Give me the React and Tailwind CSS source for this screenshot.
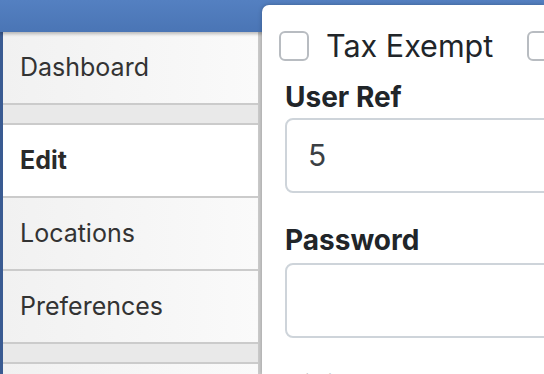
export default function App() {
  const font = { fontFamily: 'Inter, "Noto Sans", sans-serif' };
  return (
    <div className="w-[544px] h-[374px] overflow-hidden bg-[#f2f2f2] flex flex-col" style={font}>
      <div className="h-[32px] shrink-0 bg-gradient-to-b from-[#5480c1] to-[#4a75b5] shadow-[0_2px_3px_rgba(0,0,0,0.25)] relative z-10" />
      <div className="flex flex-1 min-h-0">
        <div className="w-[3px] shrink-0 bg-[#3a5b92]" />
        <div className="w-[259px] shrink-0 flex flex-col border-r-4 border-[#cbcbcb] bg-[#f4f4f4]">
          <div className="h-[71px] shrink-0 flex items-center pl-[17px] text-[25px] text-[#333] bg-gradient-to-r from-[#f1f1f1] to-[#fafafa]">Dashboard</div>
          <div className="h-[22px] shrink-0 border-y-2 border-[#cbcbcb] bg-[#e9e9e9]" />
          <div className="h-[71px] shrink-0 flex items-center pl-[17px] text-[25px] font-bold text-[#2a2a2a] bg-white">Edit</div>
          <div className="h-[73px] shrink-0 border-t-2 border-[#cbcbcb] flex items-center pl-[17px] text-[25px] text-[#333] bg-gradient-to-r from-[#f1f1f1] to-[#fafafa]">Locations</div>
          <div className="h-[73px] shrink-0 border-t-2 border-[#cbcbcb] flex items-center pl-[17px] text-[25px] text-[#333] bg-gradient-to-r from-[#f1f1f1] to-[#fafafa]">Preferences</div>
          <div className="h-[22px] shrink-0 border-y-2 border-[#cbcbcb] bg-[#e9e9e9]" />
          <div className="flex-1 bg-gradient-to-r from-[#f1f1f1] to-[#fafafa]" />
        </div>
        <div className="flex-1 min-w-0 -mt-[27px] relative z-20 bg-white rounded-tl-[7px] shadow-[0_0_4px_rgba(0,0,0,0.25)] text-[#212529]">
          <div className="flex items-center pl-[17px] pt-[26px]">
            <div className="w-[30px] h-[30px] shrink-0 rounded-[6px] border-2 border-[#b8bcc1]" />
            <span className="ml-[17px] text-[30.5px] leading-[30px] whitespace-nowrap">Tax Exempt</span>
            <div className="ml-[34px] w-[30px] h-[30px] shrink-0 rounded-[6px] border-2 border-[#b8bcc1]" />
          </div>
          <div className="pl-[23px] pt-[19px]">
            <div className="text-[28px] font-bold leading-[34px] whitespace-nowrap">User Ref</div>
            <div className="mt-[4px] h-[75px] w-[320px] rounded-[8px] border-2 border-[#ced4da] flex items-center pl-[21px] text-[30px] text-[#3b3f44]">5</div>
          </div>
          <div className="pl-[23px] pt-[30px]">
            <div className="text-[28px] font-bold leading-[34px] whitespace-nowrap">Password</div>
            <div className="mt-[6px] h-[75px] w-[320px] rounded-[8px] border-2 border-[#ced4da]" />
          </div>
          <div className="pl-[23px] pt-[31px]">
            <div className="text-[28px] font-bold leading-[34px] whitespace-nowrap">Billing Address</div>
          </div>
        </div>
      </div>
    </div>
  );
}
